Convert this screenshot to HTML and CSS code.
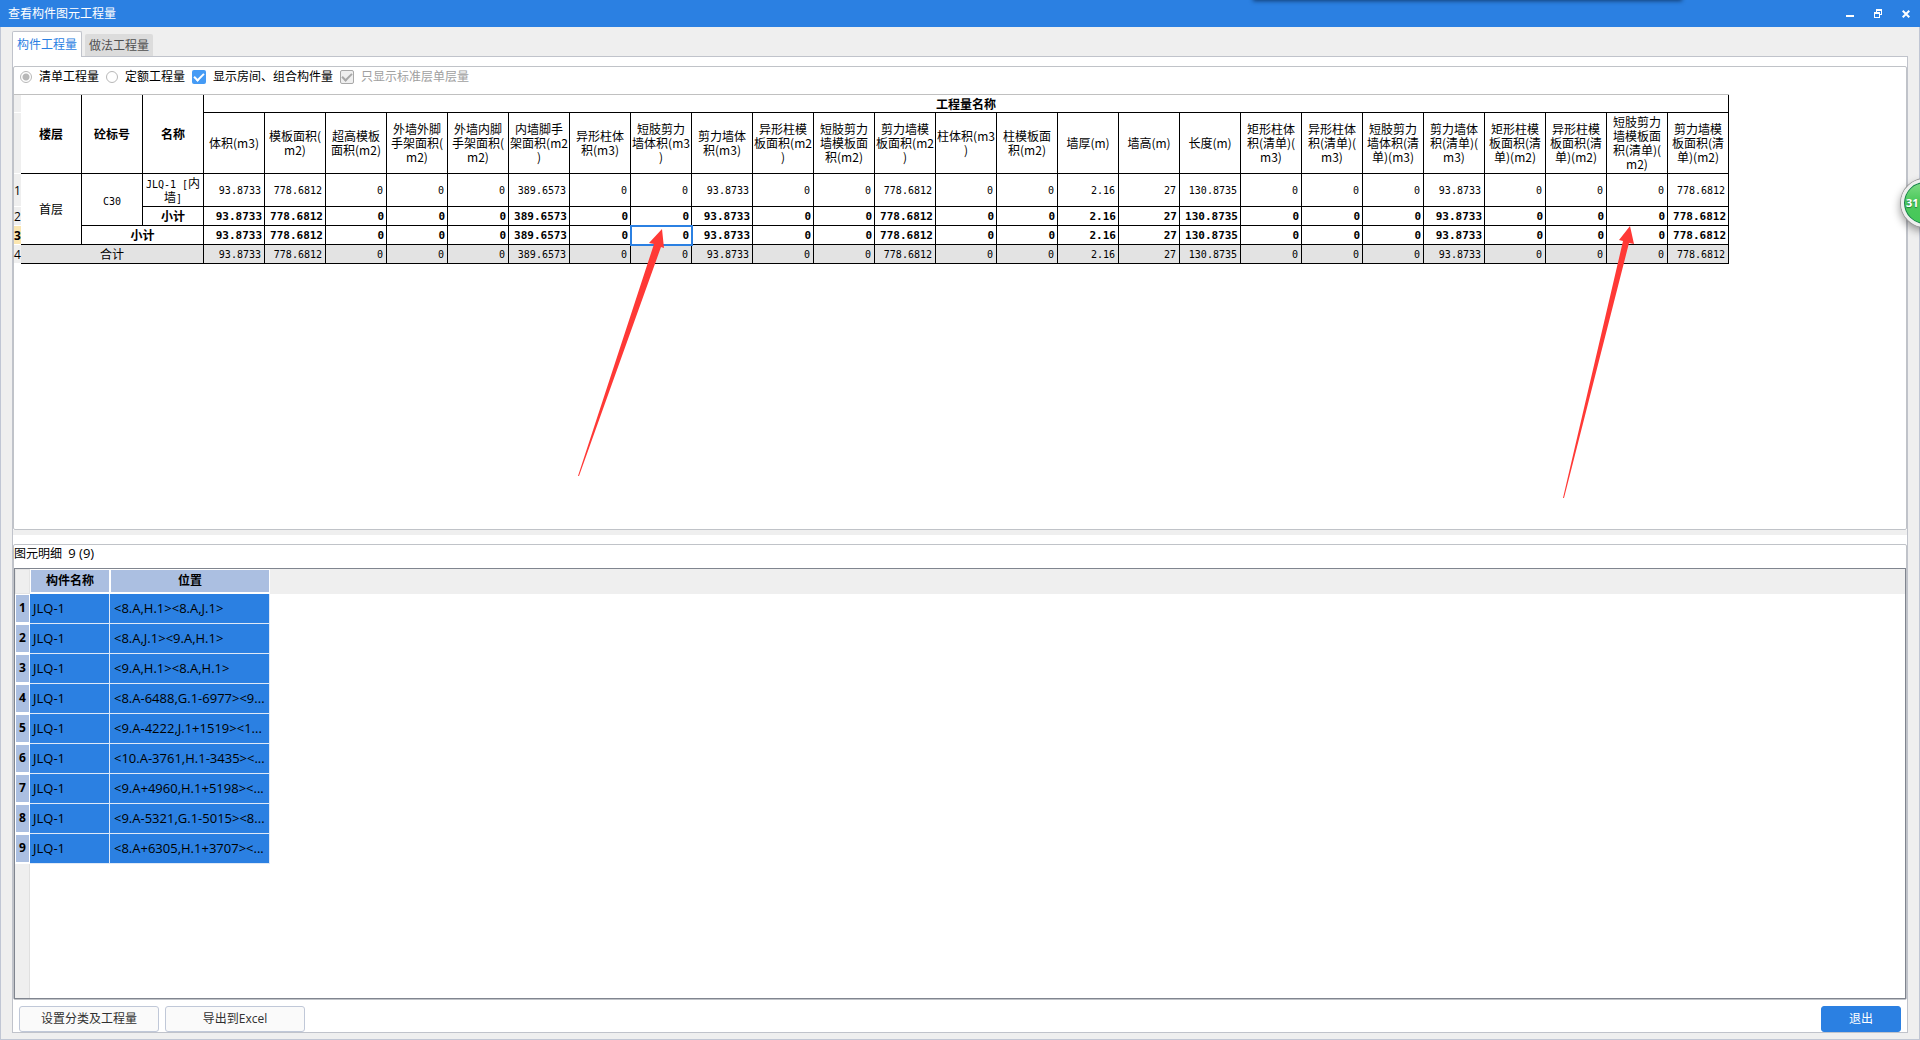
FILE: index.html
```html
<!DOCTYPE html>
<html lang="zh-CN">
<head>
<meta charset="utf-8">
<title>查看构件图元工程量</title>
<link rel="stylesheet" href="styles.css">
</head>
<body>
<div class="window">
  <header class="titlebar">
    <h1 class="title">查看构件图元工程量</h1>
    <div class="dock-shadow"></div>
    <div class="window-controls">
      <button class="win-btn" aria-label="最小化"><svg width="8" height="10" viewBox="0 0 8 10"><path d="M0 6h8v2H0z" fill="#fff"/></svg></button>
      <button class="win-btn" aria-label="还原"><svg width="8" height="10" viewBox="0 0 8 10" shape-rendering="crispEdges"><path d="M2 0h6v6H6V5h1V2H3v1H2zM0 3h6v6H0zM1 5v3h4V5z" fill="#fff" fill-rule="evenodd"/></svg></button>
      <button class="win-btn" aria-label="关闭"><svg width="8" height="10" viewBox="0 0 8 10"><path d="M.7 1.7l6.6 6.6M7.3 1.7L.7 8.3" stroke="#fff" stroke-width="2" fill="none"/></svg></button>
    </div>
  </header>

  <main class="client">
    <nav class="tabs">
      <button class="tab tab-active">构件工程量</button>
      <button class="tab">做法工程量</button>
    </nav>

    <div class="panel">
      <section class="group group-quantity">
        <div class="options">
          <label class="option"><input type="radio" name="mode" checked disabled>清单工程量</label>
          <label class="option"><input type="radio" name="mode">定额工程量</label>
          <label class="option"><input type="checkbox" checked>显示房间、组合构件量</label>
          <label class="option option-disabled"><input type="checkbox" checked disabled>只显示标准层单层量</label>
        </div>
        <table class="quantity">
          <colgroup><col class="col-num"><col span="28" class="col-data"></colgroup>
          <thead>
            <tr class="row-group"><th class="num"></th><th rowspan="2">楼层</th><th rowspan="2">砼标号</th><th rowspan="2">名称</th><th colspan="25">工程量名称</th></tr>
            <tr class="row-fields"><th class="num"></th>
              <th>体积(m3)</th><th>模板面积(<br>m2)</th><th>超高模板<br>面积(m2)</th><th>外墙外脚<br>手架面积(<br>m2)</th><th>外墙内脚<br>手架面积(<br>m2)</th><th>内墙脚手<br>架面积(m2<br>)</th><th>异形柱体<br>积(m3)</th><th>短肢剪力<br>墙体积(m3<br>)</th><th>剪力墙体<br>积(m3)</th><th>异形柱模<br>板面积(m2<br>)</th><th>短肢剪力<br>墙模板面<br>积(m2)</th><th>剪力墙模<br>板面积(m2<br>)</th><th>柱体积(m3<br>)</th><th>柱模板面<br>积(m2)</th><th>墙厚(m)</th><th>墙高(m)</th><th>长度(m)</th><th>矩形柱体<br>积(清单)(<br>m3)</th><th>异形柱体<br>积(清单)(<br>m3)</th><th>短肢剪力<br>墙体积(清<br>单)(m3)</th><th>剪力墙体<br>积(清单)(<br>m3)</th><th>矩形柱模<br>板面积(清<br>单)(m2)</th><th>异形柱模<br>板面积(清<br>单)(m2)</th><th>短肢剪力<br>墙模板面<br>积(清单)(<br>m2)</th><th>剪力墙模<br>板面积(清<br>单)(m2)</th></tr>
          </thead>
          <tbody>
            <tr class="row-item"><th class="num">1</th><td class="name" rowspan="3">首层</td><td class="name" rowspan="2"><span class="mono">C30</span></td><td class="name"><span class="mono">JLQ-1 [</span>内<br>墙<span class="mono">]</span></td><td>93.8733</td><td>778.6812</td><td>0</td><td>0</td><td>0</td><td>389.6573</td><td>0</td><td>0</td><td>93.8733</td><td>0</td><td>0</td><td>778.6812</td><td>0</td><td>0</td><td>2.16</td><td>27</td><td>130.8735</td><td>0</td><td>0</td><td>0</td><td>93.8733</td><td>0</td><td>0</td><td>0</td><td>778.6812</td></tr>
            <tr class="row-sub"><th class="num">2</th><td class="name">小计</td><td>93.8733</td><td>778.6812</td><td>0</td><td>0</td><td>0</td><td>389.6573</td><td>0</td><td>0</td><td>93.8733</td><td>0</td><td>0</td><td>778.6812</td><td>0</td><td>0</td><td>2.16</td><td>27</td><td>130.8735</td><td>0</td><td>0</td><td>0</td><td>93.8733</td><td>0</td><td>0</td><td>0</td><td>778.6812</td></tr>
            <tr class="row-sub"><th class="num num-current">3</th><td class="name" colspan="2">小计</td><td>93.8733</td><td>778.6812</td><td>0</td><td>0</td><td>0</td><td>389.6573</td><td>0</td><td class="cell-current">0</td><td>93.8733</td><td>0</td><td>0</td><td>778.6812</td><td>0</td><td>0</td><td>2.16</td><td>27</td><td>130.8735</td><td>0</td><td>0</td><td>0</td><td>93.8733</td><td>0</td><td>0</td><td>0</td><td>778.6812</td></tr>
            <tr class="row-total"><th class="num">4</th><td class="name" colspan="3">合计</td><td>93.8733</td><td>778.6812</td><td>0</td><td>0</td><td>0</td><td>389.6573</td><td>0</td><td>0</td><td>93.8733</td><td>0</td><td>0</td><td>778.6812</td><td>0</td><td>0</td><td>2.16</td><td>27</td><td>130.8735</td><td>0</td><td>0</td><td>0</td><td>93.8733</td><td>0</td><td>0</td><td>0</td><td>778.6812</td></tr>
          </tbody>
        </table>
      </section>

      <div class="splitter"></div>

      <section class="group group-detail">
        <h2 class="detail-title">图元明细&nbsp; <span class="count">9 (9)</span></h2>
        <div class="detail-view">
          <table class="detail">
            <colgroup><col class="col-index"><col class="col-component"><col class="col-position"></colgroup>
            <thead><tr><th class="corner"></th><th>构件名称</th><th>位置</th></tr></thead>
            <tbody>
              <tr><th>1</th><td>JLQ-1</td><td>&lt;8.A,H.1&gt;&lt;8.A,J.1&gt;</td></tr>
              <tr><th>2</th><td>JLQ-1</td><td>&lt;8.A,J.1&gt;&lt;9.A,H.1&gt;</td></tr>
              <tr><th>3</th><td>JLQ-1</td><td>&lt;9.A,H.1&gt;&lt;8.A,H.1&gt;</td></tr>
              <tr><th>4</th><td>JLQ-1</td><td>&lt;8.A-6488,G.1-6977&gt;&lt;9...</td></tr>
              <tr><th>5</th><td>JLQ-1</td><td>&lt;9.A-4222,J.1+1519&gt;&lt;1...</td></tr>
              <tr><th>6</th><td>JLQ-1</td><td>&lt;10.A-3761,H.1-3435&gt;&lt;...</td></tr>
              <tr><th>7</th><td>JLQ-1</td><td>&lt;9.A+4960,H.1+5198&gt;&lt;...</td></tr>
              <tr><th>8</th><td>JLQ-1</td><td>&lt;9.A-5321,G.1-5015&gt;&lt;8...</td></tr>
              <tr><th>9</th><td>JLQ-1</td><td>&lt;8.A+6305,H.1+3707&gt;&lt;...</td></tr>
            </tbody>
          </table>
          <div class="detail-rest"></div>
        </div>
      </section>

      <footer class="actions">
        <button class="btn btn-wide">设置分类及工程量</button>
        <button class="btn btn-wide">导出到Excel</button>
        <button class="btn btn-primary">退出</button>
      </footer>
    </div>
  </main>

  <svg class="annotation" width="1700" height="520" viewBox="0 0 1700 520" aria-hidden="true">
    <path d="M662 229L649 243 654 244 578 476 579 476 661 247 664 248z" fill="#ff3936"/>
    <path d="M1630 226L1619 240 1623 241 1563 498 1564 498 1629 243 1634 244z" fill="#ff3936"/>
  </svg>
  <div class="float-clip"><div class="float-ball"><span>31</span></div></div>
</div>
</body>
</html>
```
FILE: styles.css
```css
* {
  box-sizing: border-box;
}

body {
  margin: 0;
  font: 12px/16px "Open Sans", "Noto Sans CJK SC", sans-serif;
  color: #000;
}

button,
input {
  font: inherit;
  margin: 0;
}

.window {
  position: relative;
  display: flex;
  flex-direction: column;
  height: 100vh;
  min-height: 720px;
  background: #efefef;
  overflow: hidden;
}

/* Title bar */
.titlebar {
  position: relative;
  flex: none;
  display: flex;
  align-items: center;
  justify-content: space-between;
  height: 27px;
  padding: 0 10px 0 8px;
  background: #2b80e2;
  color: #fff;
  overflow: hidden;
}

.title {
  margin: 0;
  font-size: 12px;
  font-weight: 400;
}

.dock-shadow {
  position: absolute;
  top: -10px;
  left: 1254px;
  width: 427px;
  height: 10px;
  box-shadow: 0 0 4px 1px #123c70;
}

.window-controls {
  display: flex;
  gap: 20px;
}

.win-btn {
  display: flex;
  padding: 0;
  border: 0;
  background: none;
}

/* Client area */
.client {
  flex: 1;
  display: flex;
  flex-direction: column;
  padding: 4px 11px 6px;
  border: 1px solid #c0c6d4;
  border-top: 0;
}

.tabs {
  flex: none;
  display: flex;
  align-items: flex-end;
  gap: 3px;
  height: 25px;
}

.tab {
  width: 68px;
  height: 22px;
  padding: 2px 0 0;
  border: 0;
  border-radius: 2px 2px 0 0;
  background: #dcdcdc;
  color: #505050;
  white-space: nowrap;
}

.tab-active {
  z-index: 1;
  width: 70px;
  height: 26px;
  margin-bottom: -1px;
  padding: 0;
  border: 1px solid #c0c3cb;
  border-bottom: 0;
  background: #fff;
  color: #2b80e2;
}

.panel {
  flex: 1;
  display: flex;
  flex-direction: column;
  padding-top: 9px;
  border: 1px solid #c0c3cb;
  background: #fff;
}

.group {
  border: 1px solid #c0c3c8;
  border-radius: 2px;
  display: flex;
  flex-direction: column;
}

.group-quantity {
  flex: 464 1 0;
}

.splitter {
  flex: none;
  height: 5px;
  margin-bottom: 9px;
  background: #efefef;
}

.group-detail {
  flex: 456 1 0;
}

/* Options */
.options {
  display: flex;
  flex: none;
  gap: 7px;
  height: 27px;
  padding: 1px 6px 0;
}

.option {
  display: flex;
  align-items: center;
  gap: 7px;
  height: 18px;
}

.option-disabled {
  color: #a0a0a0;
}

.option input {
  appearance: none;
  flex: none;
  width: 12px;
  height: 12px;
  border: 1px solid #b8b8b8;
  border-radius: 50%;
  background: #fff;
}

.option input[type="radio"]:checked {
  background: radial-gradient(circle, #b8b8b8 3px, #fff 4px);
}

.option input[type="checkbox"] {
  width: 14px;
  height: 14px;
  border: 0;
  border-radius: 2px;
  background: #459bf5;
  display: grid;
  place-items: center;
}

.option input[type="checkbox"]::before {
  content: "";
  width: 8px;
  height: 4px;
  margin-top: -3px;
  border: solid #fff;
  border-width: 0 0 2px 2px;
  transform: rotate(-45deg);
}

.option input[type="checkbox"]:disabled {
  border: 1px solid #a8a8a8;
  background: #efefef;
}

.option input[type="checkbox"]:disabled::before {
  border-color: #a8a8a8;
}

/* Quantity table */
.quantity {
  width: 1715px;
  table-layout: fixed;
  border-collapse: separate;
  border-spacing: 0;
  border-top: 1px solid #c0c0c0;
  line-height: 14px;
}

.col-num {
  width: 7px;
}

.col-data {
  width: 61px;
}

.quantity th,
.quantity td {
  padding: 0;
  border: solid #000;
  border-width: 0 1px 1px 0;
  white-space: nowrap;
}

.quantity th {
  font-family: "Noto Sans CJK SC", sans-serif;
}

.quantity .row-fields th {
  font-weight: 400;
}

.quantity td {
  padding: 2px 3px 0 0;
  font: 10px/14px "DejaVu Sans Mono", monospace;
  text-align: right;
}

.quantity .name {
  padding: 0;
  font: 12px/14px "Noto Sans CJK SC", sans-serif;
  text-align: center;
}

.mono {
  font: 10px/10px "DejaVu Sans Mono", monospace;
}

.quantity .num {
  padding-top: 2px;
  border: 0;
  border-bottom: 1px solid #fff;
  background: #efefef;
  font: 12px/14px "Open Sans", sans-serif;
  text-align: left;
}

.quantity .num-current {
  background: #fbe6b0;
  font-weight: 700;
}

.row-group {
  height: 18px;
}

.row-fields {
  height: 61px;
}

.row-item {
  height: 33px;
}

.row-sub,
.row-total {
  height: 19px;
}

.quantity .row-sub td {
  font-size: 11px;
  font-weight: 700;
  padding-right: 2px;
}

.quantity .row-sub .name {
  padding: 0;
  font-size: 12px;
}

.row-total td {
  background: #e3e3e3;
}

.quantity .cell-current {
  outline: 2px solid #2b80e2;
  outline-offset: -1px;
}

/* Detail table */
.detail-title {
  margin: 0;
  padding-bottom: 6px;
  font-size: 12px;
  font-weight: 400;
  line-height: 17px;
}

.count {
  font-size: 13px;
}

.detail-view {
  flex: 1;
  display: flex;
  flex-direction: column;
  border: 1px solid #80858f;
  background: linear-gradient(#efefef, #efefef) 0 0 / 100% 25px no-repeat;
}

.detail {
  width: 255px;
  table-layout: fixed;
  border-collapse: separate;
  border-spacing: 0;
}

.col-index {
  width: 15px;
}

.col-component {
  width: 80px;
}

.col-position {
  width: 160px;
}

.detail th {
  padding: 0;
  border: solid #fff;
  border-width: 1px 1px 2px;
  background: #abbfe1;
  font-weight: 700;
}

.detail .corner {
  border: 1px solid #e4e4e4;
  background: #efefef;
}

.detail thead tr {
  height: 25px;
}

.detail tbody tr {
  height: 30px;
}

.detail td {
  padding: 0 0 0 4px;
  border: solid #dfe9f7;
  border-width: 0 1px 1px 0;
  background: #2b80e2;
  font-size: 13px;
  white-space: nowrap;
}

.detail td:first-of-type {
  padding-left: 3px;
}

.detail-rest {
  flex: 1;
  width: 15px;
  border-right: 1px solid #e0e0e0;
  background: #efefef;
}

/* Bottom buttons */
.actions {
  flex: none;
  display: flex;
  gap: 6px;
  padding: 6px 6px 0;
}

.btn {
  height: 26px;
  padding: 0;
  border: 1px solid #c0c8d8;
  border-radius: 3px;
  background: #fafafa;
  color: #303030;
}

.btn-wide {
  width: 140px;
}

.btn-primary {
  width: 80px;
  margin-left: auto;
  border-color: #2b80e2;
  background: #2b80e2;
  color: #fff;
}

/* Overlays */
.annotation {
  position: absolute;
  top: 0;
  left: 0;
  pointer-events: none;
}

.float-clip {
  position: absolute;
  top: 160px;
  right: 0;
  width: 40px;
  height: 90px;
  overflow: hidden;
}

.float-ball {
  position: absolute;
  top: 19px;
  left: 21px;
  width: 48px;
  height: 48px;
  padding: 13px 0 0 2px;
  border: 3px solid #eee;
  border-radius: 50%;
  background: linear-gradient(#7fdc86, #4cc95c 45%, #45c858);
  box-shadow: 0 0 0 1px #999, inset 0 0 0 1px #187a50, -1px 4px 8px rgba(0, 0, 0, 0.4);
  color: #fff;
  font: 700 11px/16px "Open Sans", sans-serif;
  text-shadow: 0 1px 1px #207838;
}
```
